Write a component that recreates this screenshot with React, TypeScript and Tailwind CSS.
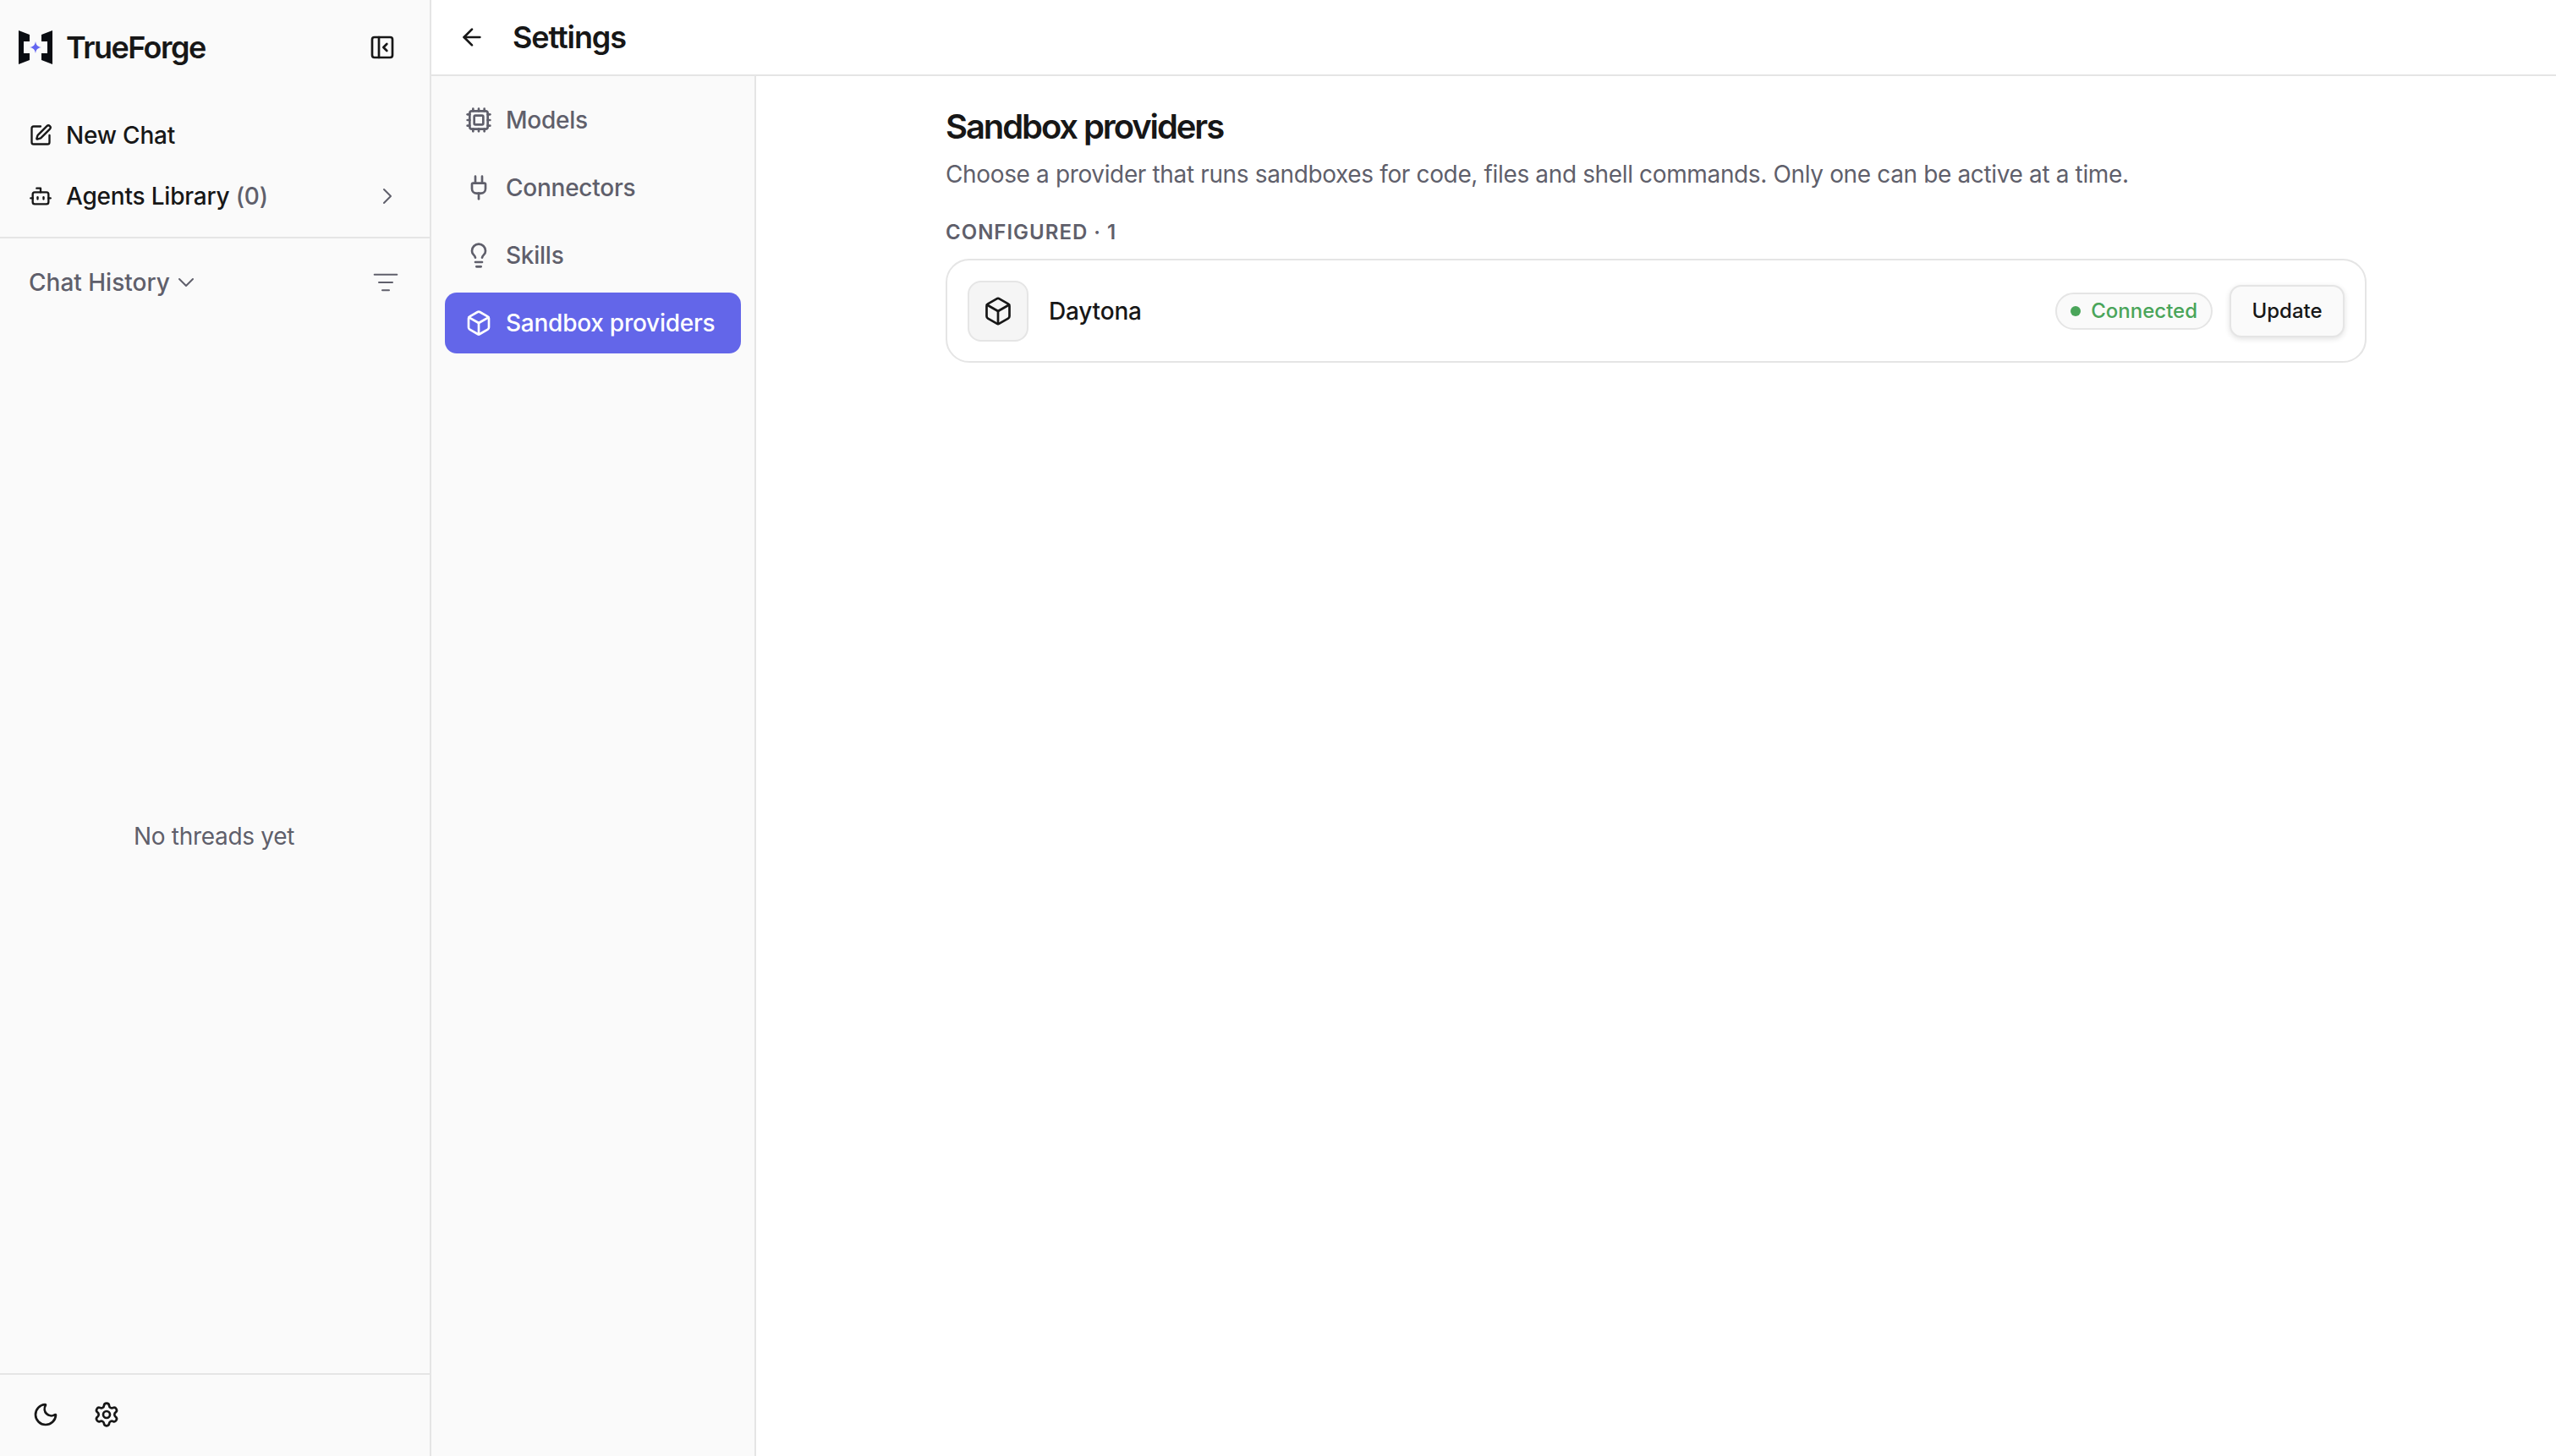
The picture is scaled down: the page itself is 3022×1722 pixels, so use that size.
import { ArrowLeft, Bot, Box, ChevronDown, ChevronRight, Cpu, Lightbulb, ListFilter, Moon, PanelLeftClose, Plug, Settings, SquarePen } from "lucide-react";

const Logo = () => (
  <svg width="40" height="40" viewBox="0 0 40 40">
    <path d="M0 0L13 5V13H6V27H13V35L0 40Z" fill="#0a0d12" />
    <path d="M40 0L27 5V13H34V27H27V35L40 40Z" fill="#0a0d12" />
    <path d="M20 13C20.8 17.5 22.5 19.2 27 20C22.5 20.8 20.8 22.5 20 27C19.2 22.5 17.5 20.8 13 20C17.5 19.2 19.2 17.5 20 13Z" fill="#6366f1" />
  </svg>
);

const navItems = [
  { label: "Models", icon: Cpu },
  { label: "Connectors", icon: Plug },
  { label: "Skills", icon: Lightbulb },
  { label: "Sandbox providers", icon: Box, active: true },
];

const App = () => {
  return (
    <div className="flex h-screen w-full bg-white text-[#171717] font-['Inter','Liberation_Sans',sans-serif]">
      <aside className="flex h-full w-[510px] shrink-0 flex-col border-r-2 border-[#e5e5e5] bg-[#fafafa]">
        <div className="flex h-[112px] items-center justify-between pl-[22px] pr-[40px]">
          <div className="flex items-center gap-[16px]">
            <Logo />
            <span className="text-[36px] font-semibold tracking-[-1.55px]">TrueForge</span>
          </div>
          <PanelLeftClose size={32} strokeWidth={2} />
        </div>
        <div className="flex flex-col border-b-2 border-[#e5e5e5] px-[34px] pt-[12px] pb-[12px]">
          <div className="flex h-[72px] items-center gap-[16px] text-[28px] font-medium tracking-[-0.2px]">
            <SquarePen size={28} strokeWidth={2} />
            <span>New Chat</span>
          </div>
          <div className="flex h-[72px] items-center text-[28px] font-medium tracking-[-0.2px]">
            <Bot size={28} strokeWidth={2} />
            <span className="ml-[16px]">Agents Library <span className="text-[#5f5f6b]">(0)</span></span>
            <ChevronRight size={32} strokeWidth={1.5} className="ml-auto text-[#5f5f6b]" />
          </div>
        </div>
        <div className="flex items-center justify-between pl-[34px] pr-[36px] pt-[32px] text-[#5f5f6b]">
          <div className="flex h-[40px] items-center gap-[3px] text-[28px] font-medium">
            <span>Chat History</span>
            <ChevronDown size={32} strokeWidth={1.5} />
          </div>
          <ListFilter size={32} strokeWidth={1.5} />
        </div>
        <div className="flex flex-1 items-center justify-center pr-[2px] text-[28px] tracking-[-0.3px] text-[#5f5f6b]">No threads yet</div>
        <div className="flex h-[98px] items-center gap-[40px] border-t-2 border-[#e5e5e5] pb-[2px] pl-[38px]">
          <Moon size={32} strokeWidth={2} />
          <Settings size={32} strokeWidth={2} />
        </div>
      </aside>
      <div className="flex min-w-0 flex-1 flex-col">
        <header className="flex h-[90px] shrink-0 items-center gap-[32px] border-b-2 border-[#e5e5e5] pl-[32px]">
          <ArrowLeft size={32} strokeWidth={2} />
          <h1 className="text-[36px] font-semibold tracking-[-1.1px]">Settings</h1>
        </header>
        <div className="flex min-h-0 flex-1">
          <nav className="flex w-[384px] shrink-0 flex-col gap-[8px] border-r-2 border-[#e5e5e5] bg-[#fafafa] p-[16px]">
            {navItems.map((item) => (
              <div
                key={item.label}
                className={
                  item.active
                    ? "flex h-[72px] items-center gap-[16px] rounded-[14px] bg-[#6366e9] pl-[24px] text-[28px] font-medium tracking-[-0.25px] text-white"
                    : "flex h-[72px] items-center gap-[16px] rounded-[14px] pl-[24px] text-[28px] font-medium tracking-[-0.25px] text-[#5f5f6b]"
                }
              >
                <item.icon size={32} strokeWidth={2} />
                <span>{item.label}</span>
              </div>
            ))}
          </nav>
          <main className="flex min-w-0 flex-1 justify-center pt-[38px]">
            <div className="w-[1680px]">
              <h2 className="text-[40px] leading-[44px] font-semibold tracking-[-2.1px]">Sandbox providers</h2>
              <p className="mt-[14px] text-[28px] leading-[40px] tracking-[-0.36px] text-[#5f5f6b]">
                Choose a provider that runs sandboxes for code, files and shell commands. Only one can be active at a time.
              </p>
              <div className="mt-[33px] text-[24px] leading-[32px] font-semibold tracking-[1px] text-[#5f5f6b]">CONFIGURED · 1</div>
              <div className="mt-[15px] flex h-[123px] items-center rounded-[28px] border-2 border-[#e5e5e5] bg-white px-[24px]">
                <div className="flex h-[72px] w-[72px] items-center justify-center rounded-[16px] border-2 border-[#e5e5e5] bg-[#f5f5f5]">
                  <Box size={36} strokeWidth={1.8} />
                </div>
                <span className="ml-[24px] text-[28px] font-medium tracking-[-0.2px]">Daytona</span>
                <div className="ml-auto flex h-[44px] items-center gap-[12px] rounded-full border-2 border-[#e5e5e5] bg-[#fafafa] pl-[16px] pr-[16px] text-[24px] font-medium text-[#4aa55a]">
                  <span className="h-[12px] w-[12px] rounded-full bg-[#4aa55a]" />
                  Connected
                </div>
                <button className="ml-[20px] flex h-[62px] w-[136px] items-center justify-center rounded-[14px] border-2 border-[#e5e5e5] bg-[#fafafa] text-[24px] font-medium shadow-[0_2px_6px_rgba(0,0,0,0.12)]">
                  Update
                </button>
              </div>
            </div>
          </main>
        </div>
      </div>
    </div>
  );
};

export default App;
